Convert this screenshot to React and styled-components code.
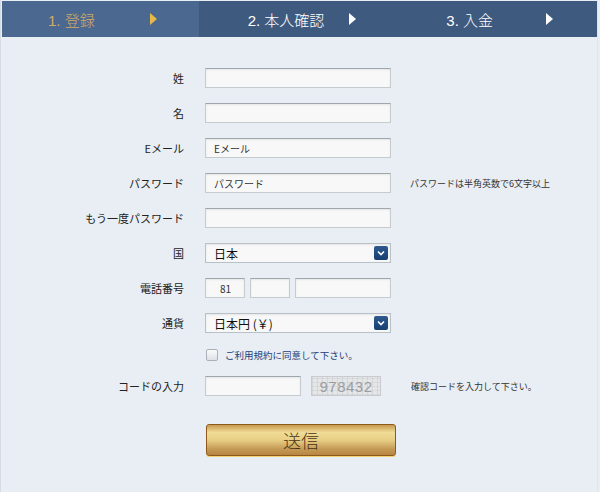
import React from "react";
import styled, { createGlobalStyle } from "styled-components";

const Global = createGlobalStyle`
  html, body { margin: 0; padding: 0; background: #e8eef3; }
  body { font-family: "Liberation Sans", Arial, "Noto Sans CJK JP", sans-serif; }
`;

const Page = styled.div`
  width: 598px;
  height: 492px;
  box-sizing: border-box;
  border-left: 1px solid #d5dde4;
  border-right: 1px solid #dfe5ea;
  background: #e8eef3;
  display: flex;
  flex-direction: column;
`;

const Steps = styled.div`
  display: flex;
  height: 36px;
  margin: 1px 0 0 1px;
  background: #3f5a7f;
`;

const Step = styled.div`
  flex: 1;
  display: flex;
  align-items: center;
  position: relative;
  background: ${(p) => (p.$active ? "#4a6890" : "#3f5a7f")};
  color: ${(p) => (p.$active ? "#d2ac66" : "#ffffff")};
  font-size: 15px;
  font-weight: 300;
  padding-left: ${(p) => p.$pad}px;
`;

const Arrow = styled.span`
  position: absolute;
  right: ${(p) => p.$right}px;
  top: 12px;
  width: 0;
  height: 0;
  border-top: 6px solid transparent;
  border-bottom: 6px solid transparent;
  border-left: 7px solid ${(p) => (p.$active ? "#e6b949" : "#ffffff")};
`;

const Form = styled.div`
  display: flex;
  flex-direction: column;
  padding-top: 31px;
`;

const Row = styled.div`
  display: flex;
  align-items: center;
  height: 20px;
  margin-bottom: ${(p) => p.$mb ?? 15}px;
`;

const Label = styled.div`
  width: 204px;
  text-align: right;
  font-size: 11px;
  color: #222;
  padding-right: 21px;
  box-sizing: border-box;
  flex-shrink: 0;
  font-family: "Noto Sans CJK JP", sans-serif;
`;

const Input = styled.div`
  width: ${(p) => p.$w ?? 186}px;
  height: 20px;
  box-sizing: border-box;
  background: #f8f8f8;
  border: 1px solid #c6cbd0;
  border-top-color: #9ea6ae;
  box-shadow: inset 0 1px 2px rgba(0,0,0,0.08);
  font-size: 10px;
  color: #333;
  display: flex;
  align-items: center;
  padding-left: ${(p) => p.$pl ?? 8}px;
  margin-left: ${(p) => p.$ml ?? 0}px;
  font-family: "Noto Sans CJK JP", sans-serif;
`;

const Select = styled(Input)`
  font-size: 12px;
  color: #111;
  position: relative;
  border-color: #b8c0c8;
`;

const SelectBtn = styled.span`
  position: absolute;
  right: 2px;
  top: 2px;
  width: 14px;
  height: 14px;
  border-radius: 2px;
  background: linear-gradient(#2f5a8f, #173f70);
  display: flex;
  align-items: center;
  justify-content: center;
`;

const Hint = styled.div`
  margin-left: ${(p) => p.$ml ?? 19}px;
  font-size: 9px;
  color: #333;
  font-family: "Noto Sans CJK JP", sans-serif;
`;

const Check = styled.div`
  display: flex;
  align-items: center;
  margin-left: 205px;
  font-size: 9.5px;
  color: #223f7a;
  font-family: "Noto Sans CJK JP", sans-serif;
`;

const Box = styled.span`
  width: 10px;
  height: 10px;
  border: 1px solid #a9b0b8;
  border-radius: 2px;
  background: linear-gradient(#fafafa, #dde2e6);
  margin-right: 7px;
`;

const Captcha = styled.div`
  width: 70px;
  height: 20px;
  margin-left: 10px;
  box-sizing: border-box;
  border: 1px solid #c8ccd0;
  background:
    repeating-linear-gradient(90deg, rgba(150,150,150,0.18) 0 1px, transparent 1px 5px),
    repeating-linear-gradient(0deg, rgba(150,150,150,0.15) 0 1px, transparent 1px 4px),
    #e4e6e8;
  color: #9a9ea3;
  font-size: 15px;
  letter-spacing: 0.5px;
  display: flex;
  align-items: center;
  justify-content: center;
`;

const Submit = styled.div`
  margin-left: 205px;
  margin-top: 28px;
  width: 190px;
  height: 32px;
  box-sizing: border-box;
  border: 1px solid #8e5a1c;
  border-radius: 3px;
  background: linear-gradient(180deg, #c79a4f 0%, #f0dc96 25%, #e8cf85 50%, #c49a55 80%, #b98443 100%);
  box-shadow: 0 1px 0 #f2d277;
  color: #4a3412;
  font-size: 18px;
  font-weight: 300;
  display: flex;
  align-items: center;
  justify-content: center;
  font-family: "Noto Sans CJK JP", sans-serif;
`;

const Chevron = () => (
  <SelectBtn>
    <svg width="8" height="6" viewBox="0 0 8 6"><path d="M1 1.5 L4 4.5 L7 1.5" stroke="#fff" strokeWidth="1.6" fill="none" /></svg>
  </SelectBtn>
);

export default function App() {
  return (
    <>
      <Global />
      <Page>
        <Steps>
          <Step $active $pad={46}>
            1. 登録
            <Arrow $active $right={42} />
          </Step>
          <Step $pad={49}>
            2. 本人確認
            <Arrow $right={42} />
          </Step>
          <Step $pad={48}>
            3. 入金
            <Arrow $right={44} />
          </Step>
        </Steps>
        <Form>
          <Row><Label>姓</Label><Input /></Row>
          <Row><Label>名</Label><Input /></Row>
          <Row><Label>Eメール</Label><Input>Eメール</Input></Row>
          <Row><Label>パスワード</Label><Input>パスワード</Input><Hint>パスワードは半角英数で6文字以上</Hint></Row>
          <Row><Label>もう一度パスワード</Label><Input /></Row>
          <Row>
            <Label>国</Label>
            <Select>日本<Chevron /></Select>
          </Row>
          <Row>
            <Label>電話番号</Label>
            <Input $w={40} $pl={14}>81</Input>
            <Input $w={40} $ml={5} />
            <Input $w={96} $ml={5} />
          </Row>
          <Row $mb={12}>
            <Label>通貨</Label>
            <Select>日本円 (￥)<Chevron /></Select>
          </Row>
          <Row $mb={11}>
            <Check><Box />ご利用規約に同意して下さい。</Check>
          </Row>
          <Row $mb={0}>
            <Label>コードの入力</Label>
            <Input $w={96} />
            <Captcha>978432</Captcha>
            <Hint $ml={30}>確認コードを入力して下さい。</Hint>
          </Row>
          <Submit>送信</Submit>
        </Form>
      </Page>
    </>
  );
}
